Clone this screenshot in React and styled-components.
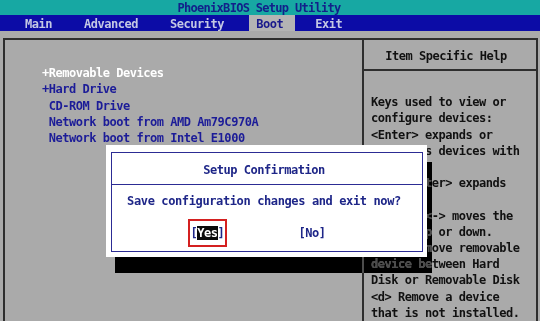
import React from "react";
import styled, { createGlobalStyle } from "styled-components";

const GlobalStyle = createGlobalStyle`
  html, body {
    margin: 0;
    padding: 0;
    background: #aaaaaa;
  }
  body {
    overflow: hidden;
  }
`;

const Screen = styled.div`
  position: relative;
  width: 540px;
  height: 321px;
  overflow: hidden;
  background: #aaaaaa;
  font-family: "DejaVu Sans Mono", "Liberation Mono", monospace;
  font-weight: bold;
  font-size: 12px;
  letter-spacing: -0.47px;
  display: flex;
  flex-direction: column;
`;

const TitleBar = styled.div`
  height: 16px;
  background: #17a8a3;
  color: #12208a;
  display: flex;
  align-items: center;
  justify-content: center;
  padding: 1px 22px 0 0;
  box-sizing: border-box;
  letter-spacing: -0.7px;
`;

const MenuBar = styled.div`
  height: 17px;
  background: #0c0ca6;
  display: flex;
  align-items: stretch;
  gap: 13px;
  padding-left: 18px;
`;

const Tab = styled.div`
  display: flex;
  align-items: center;
  padding: 2px 12px 0 7px;
  color: ${(p) => (p.$active ? "#1a1a8c" : "#c4c8e4")};
  background: ${(p) => (p.$active ? "#b4b4b4" : "transparent")};
`;

const Body = styled.div`
  flex: 1;
  display: flex;
  padding: 7px 2px 0 3px;
`;

const Frame = styled.div`
  flex: 1;
  display: grid;
  grid-template-columns: 1fr 174px;
  border: 2px solid #2e2e2e;
  border-bottom: none;
`;

const LeftPanel = styled.div`
  padding: 25px 0 0 37px;
  line-height: 16.2px;
`;

const Item = styled.div`
  white-space: pre;
  color: ${(p) => (p.$selected ? "#ffffff" : "#1c1c98")};
`;

const RightPanel = styled.div`
  border-left: 2px solid #2e2e2e;
  display: flex;
  flex-direction: column;
`;

const HelpHeader = styled.div`
  height: 31px;
  border-bottom: 2px solid #2e2e2e;
  display: flex;
  align-items: center;
  justify-content: center;
  padding: 2px 8px 0 0;
  box-sizing: border-box;
  color: #111111;
`;

const HelpText = styled.div`
  padding: 23px 0 0 7px;
  line-height: 16.2px;
  color: #111111;
  white-space: pre;
`;

const Shadow = styled.div`
  position: absolute;
  left: 115px;
  top: 162px;
  width: 317px;
  height: 112px;
  backdrop-filter: grayscale(1) invert(1) contrast(3) brightness(0.3);
`;

const Dialog = styled.div`
  position: absolute;
  left: 106px;
  top: 145px;
  width: 321px;
  height: 112px;
  box-sizing: border-box;
  background: #ffffff;
  padding: 7px 4px 5px 5px;
  display: flex;
`;

const DialogInner = styled.div`
  flex: 1;
  border: 1px solid #2c2c94;
  display: flex;
  flex-direction: column;
  color: #1e2688;
`;

const DialogTitle = styled.div`
  height: 32px;
  border-bottom: 1px solid #2c2c94;
  display: flex;
  align-items: center;
  justify-content: center;
  padding: 2px 6px 0 0;
  box-sizing: border-box;
`;

const Message = styled.div`
  margin-top: 8px;
  line-height: 16px;
  text-align: center;
  padding-right: 6px;
  letter-spacing: -0.38px;
`;

const Buttons = styled.div`
  margin-top: 10px;
  display: flex;
  justify-content: center;
  align-items: center;
  gap: 68px;
  padding-right: 18px;
`;

const Choice = styled.div`
  line-height: 16px;
  padding: 4px 1px;
  border: 2px solid ${(p) => (p.$focused ? "#d42020" : "transparent")};
  white-space: pre;
`;

const Cursor = styled.span`
  background: #0a0a0a;
  color: #ffffff;
`;

const menu = ["Main", "Advanced", "Security", "Boot", "Exit"];

const bootItems = [
  { text: "+Removable Devices", selected: true },
  { text: "+Hard Drive" },
  { text: " CD-ROM Drive" },
  { text: " Network boot from AMD Am79C970A" },
  { text: " Network boot from Intel E1000" },
];

const help = [
  "Keys used to view or",
  "configure devices:",
  "<Enter> expands or",
  "collapses devices with",
  "a + or -",
  "<Ctrl+Enter> expands",
  "all",
  "<+> and <-> moves the",
  "device up or down.",
  "<n> May move removable",
  "device between Hard",
  "Disk or Removable Disk",
  "<d> Remove a device",
  "that is not installed.",
];

export default function App() {
  return (
    <Screen>
      <GlobalStyle />
      <TitleBar>PhoenixBIOS Setup Utility</TitleBar>
      <MenuBar>
        {menu.map((m) => (
          <Tab key={m} $active={m === "Boot"}>
            {m}
          </Tab>
        ))}
      </MenuBar>
      <Body>
        <Frame>
          <LeftPanel>
            {bootItems.map((it) => (
              <Item key={it.text} $selected={it.selected}>
                {it.text}
              </Item>
            ))}
          </LeftPanel>
          <RightPanel>
            <HelpHeader>Item Specific Help</HelpHeader>
            <HelpText>{help.join("\n")}</HelpText>
          </RightPanel>
        </Frame>
      </Body>

      <Shadow />
      <Dialog>
        <DialogInner>
          <DialogTitle>Setup Confirmation</DialogTitle>
          <Message>Save configuration changes and exit now?</Message>
          <Buttons>
            <Choice $focused>
              [<Cursor>Yes</Cursor>]
            </Choice>
            <Choice>[No]</Choice>
          </Buttons>
        </DialogInner>
      </Dialog>
    </Screen>
  );
}
